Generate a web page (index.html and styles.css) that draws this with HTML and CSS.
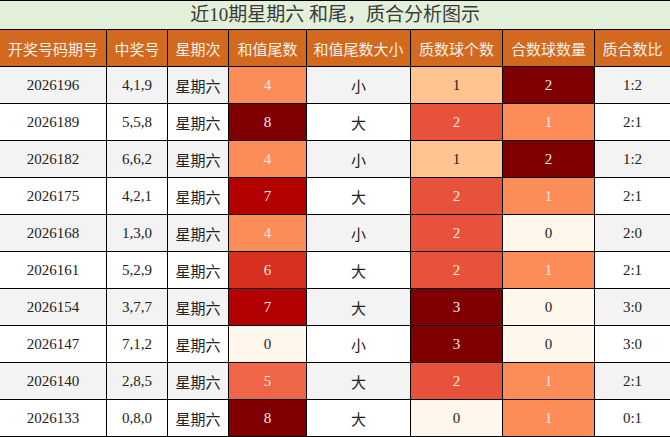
FILE: index.html
```html
<!DOCTYPE html>
<html lang="zh">
<head>
<meta charset="utf-8">
<title>近10期星期六 和尾，质合分析图示</title>
<link rel="stylesheet" href="styles.css">
</head>
<body>
<table class="grid">
  <colgroup>
    <col class="c-issue"><col class="c-num"><col class="c-day"><col class="c-sum">
    <col class="c-size"><col class="c-prime"><col class="c-comp"><col class="c-ratio">
  </colgroup>
  <thead>
    <tr class="title-row"><th colspan="8">近10期星期六 和尾，质合分析图示</th></tr>
    <tr class="head-row">
      <th>开奖号码期号</th><th>中奖号</th><th>星期次</th><th>和值尾数</th>
      <th>和值尾数大小</th><th>质数球个数</th><th>合数球数量</th><th>质合数比</th>
    </tr>
  </thead>
  <tbody>
    <tr><td>2026196</td><td>4,1,9</td><td>星期六</td><td class="h4">4</td><td>小</td><td class="z1">1</td><td class="c2">2</td><td>1:2</td></tr>
    <tr><td>2026189</td><td>5,5,8</td><td>星期六</td><td class="h8">8</td><td>大</td><td class="z2">2</td><td class="c1">1</td><td>2:1</td></tr>
    <tr><td>2026182</td><td>6,6,2</td><td>星期六</td><td class="h4">4</td><td>小</td><td class="z1">1</td><td class="c2">2</td><td>1:2</td></tr>
    <tr><td>2026175</td><td>4,2,1</td><td>星期六</td><td class="h7">7</td><td>大</td><td class="z2">2</td><td class="c1">1</td><td>2:1</td></tr>
    <tr><td>2026168</td><td>1,3,0</td><td>星期六</td><td class="h4">4</td><td>小</td><td class="z2">2</td><td class="c0">0</td><td>2:0</td></tr>
    <tr><td>2026161</td><td>5,2,9</td><td>星期六</td><td class="h6">6</td><td>大</td><td class="z2">2</td><td class="c1">1</td><td>2:1</td></tr>
    <tr><td>2026154</td><td>3,7,7</td><td>星期六</td><td class="h7">7</td><td>大</td><td class="z3">3</td><td class="c0">0</td><td>3:0</td></tr>
    <tr><td>2026147</td><td>7,1,2</td><td>星期六</td><td class="h0">0</td><td>小</td><td class="z3">3</td><td class="c0">0</td><td>3:0</td></tr>
    <tr><td>2026140</td><td>2,8,5</td><td>星期六</td><td class="h5">5</td><td>大</td><td class="z2">2</td><td class="c1">1</td><td>2:1</td></tr>
    <tr><td>2026133</td><td>0,8,0</td><td>星期六</td><td class="h8">8</td><td>大</td><td class="z0">0</td><td class="c1">1</td><td>0:1</td></tr>
  </tbody>
</table>
</body>
</html>
```
FILE: styles.css
```css
html, body {
  margin: 0;
  padding: 0;
  background: #ffffff;
}
body {
  font-family: "Liberation Serif", "Noto Sans CJK SC", serif;
  color: #222222;
}
.grid {
  border-collapse: collapse;
  table-layout: fixed;
  width: 671px;
  margin-left: -1px;
}
.c-issue { width: 107px; }
.c-num { width: 61px; }
.c-day { width: 61px; }
.c-sum { width: 78px; }
.c-size { width: 104px; }
.c-prime { width: 92px; }
.c-comp { width: 92px; }
.c-ratio { width: 76px; }

.grid th, .grid td {
  border: 1px solid #000000;
  padding: 0;
  text-align: center;
  vertical-align: middle;
  overflow: hidden;
  white-space: nowrap;
}
.title-row th {
  height: 28px;
  background: #e2efd9;
  color: #3a3a3a;
  font-size: 19px;
  line-height: 26px;
  font-weight: normal;
}
.head-row th {
  height: 36px;
  background: #d2691e;
  color: #f7f0ea;
  font-size: 15px;
  font-weight: normal;
}
.grid td {
  height: 36px;
  font-size: 15px;
}
.grid tbody tr:nth-child(odd) td { background: #f3f3f3; }
.grid tbody tr:nth-child(even) td { background: #ffffff; }

.grid tbody tr td.h0 { background: #fff7ec; color: #222222; }
.grid tbody tr td.h4 { background: #fc8d59; color: #f6e8e0; }
.grid tbody tr td.h5 { background: #ef6548; color: #f6e8e0; }
.grid tbody tr td.h6 { background: #d7301f; color: #f6e8e0; }
.grid tbody tr td.h7 { background: #b30000; color: #f6e8e0; }
.grid tbody tr td.h8 { background: #7f0000; color: #f6e8e0; }

.grid tbody tr td.z0 { background: #fff7ec; color: #222222; }
.grid tbody tr td.z1 { background: #fdc48f; color: #222222; }
.grid tbody tr td.z2 { background: #e7533a; color: #f6e8e0; }
.grid tbody tr td.z3 { background: #7f0000; color: #f6e8e0; }

.grid tbody tr td.c0 { background: #fff7ec; color: #222222; }
.grid tbody tr td.c1 { background: #fc8d59; color: #f6e8e0; }
.grid tbody tr td.c2 { background: #7f0000; color: #f6e8e0; }
```
